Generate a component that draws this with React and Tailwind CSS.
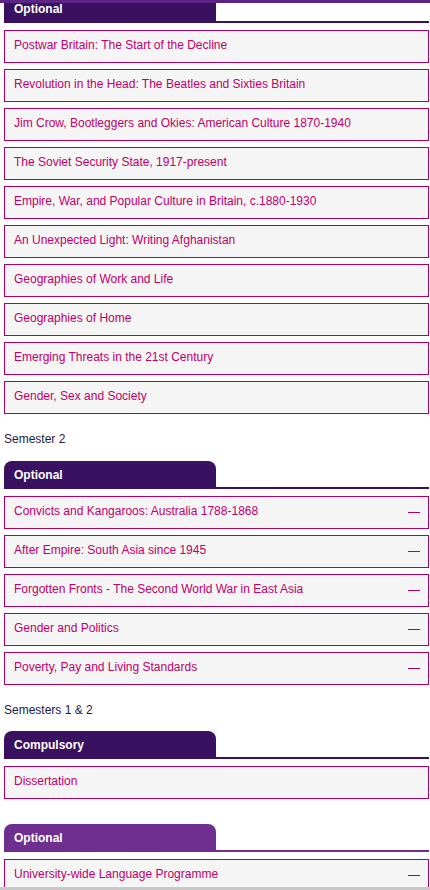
import React from 'react';

const semester1 = [
  'Postwar Britain: The Start of the Decline',
  'Revolution in the Head: The Beatles and Sixties Britain',
  'Jim Crow, Bootleggers and Okies: American Culture 1870-1940',
  'The Soviet Security State, 1917-present',
  'Empire, War, and Popular Culture in Britain, c.1880-1930',
  'An Unexpected Light: Writing Afghanistan',
  'Geographies of Work and Life',
  'Geographies of Home',
  'Emerging Threats in the 21st Century',
  'Gender, Sex and Society',
];

const semester2 = [
  'Convicts and Kangaroos: Australia 1788-1868',
  'After Empire: South Asia since 1945',
  'Forgotten Fronts - The Second World War in East Asia',
  'Gender and Politics',
  'Poverty, Pay and Living Standards',
];

const Tab = ({ label, light, first }) => (
  <div className={`flex items-end ${first ? '-mt-[5px]' : ''}`}>
    <div
      className={`w-[212px] h-[28px] rounded-t-[8px] pl-[10px] flex items-center text-white font-bold text-[12px] ${
        light ? 'bg-[#6f2f8e]' : 'bg-[#3a1161]'
      }`}
    >
      {label}
    </div>
    <div className={`flex-1 h-[2px] ${light ? 'bg-[#6f2f8e]' : 'bg-[#3a1161]'}`} />
  </div>
);

const Module = ({ title, dash }) => (
  <div className="h-[33px] border border-[#b3005f] bg-[#f4f5f4] flex items-center justify-between pl-[9px] pr-[8px] pb-[3px]">
    <span className="text-[12px] text-[#c0006b]">{title}</span>
    {dash && <span className="w-[12px] h-[1px] bg-[#b3005f] mt-[3px]" />}
  </div>
);

const Group = ({ label, light, first, items, dash }) => (
  <div>
    <Tab label={label} light={light} first={first} />
    <div className="mt-[7px] flex flex-col gap-[6px]">
      {items.map(t => (
        <Module key={t} title={t} dash={dash} />
      ))}
    </div>
  </div>
);

export default function App() {
  return (
    <div
      className="relative w-[430px] h-[890px] overflow-hidden bg-white pl-[4px] pr-[1px]"
      style={{ fontFamily: '"Liberation Sans", Arial, sans-serif' }}
    >
      <div className="absolute top-0 left-0 right-0 h-[3px] bg-[#5c2483] z-10" />
      <Group label="Optional" first items={semester1} />
      <p className="mt-[17px] text-[12px] leading-[16px] text-[#1d1a4a]">Semester 2</p>
      <div className="mt-[14px]">
        <Group label="Optional" items={semester2} dash />
      </div>
      <p className="mt-[17px] text-[12px] leading-[16px] text-[#1d1a4a]">Semesters 1 &amp; 2</p>
      <div className="mt-[13px]">
        <Group label="Compulsory" items={['Dissertation']} />
      </div>
      <div className="mt-[25px]">
        <Group label="Optional" light items={['University-wide Language Programme']} dash />
      </div>
      <div className="absolute bottom-0 left-0 right-0 h-[3px] bg-[#c8c8c8]" />
    </div>
  );
}
